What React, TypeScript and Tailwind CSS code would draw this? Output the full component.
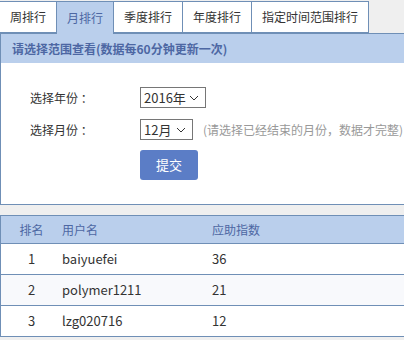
import React from 'react';

const tabs = ['周排行', '月排行', '季度排行', '年度排行', '指定时间范围排行'];

const rows = [
  { rank: 1, name: 'baiyuefei', score: 36 },
  { rank: 2, name: 'polymer1211', score: 21 },
  { rank: 3, name: 'lzg020716', score: 12 },
];

const Chevron = () => (
  <svg width="10" height="6" viewBox="0 0 10 6" className="ml-auto mr-[6px]">
    <path d="M1 1 L5 5 L9 1" fill="none" stroke="#333" strokeWidth="1" />
  </svg>
);

export default function App() {
  return (
    <div
      className="w-[404px] h-[340px] bg-[#efefef] overflow-hidden text-[12px] text-[#333]"
      style={{ fontFamily: '"Microsoft YaHei", "Noto Sans CJK SC", sans-serif' }}
    >
      {/* 顶部标签 */}
      <div className="flex pt-[1px] border-b border-[#6f8fb6]">
        {tabs.map((t, i) => (
          <div
            key={t}
            className={
              'h-[32px] px-[10px] flex items-center border-t border-r border-[#6f8fb6] -mb-[1px] ' +
              (i === 1 ? 'bg-[#bacfec] text-[#4d67a3] h-[33px]' : 'bg-white text-[#333] border-b')
            }
          >
            {t}
          </div>
        ))}
      </div>

      {/* 查看范围 */}
      <div className="border-l border-b border-[#6f8fb6] bg-white">
        <div className="h-[29px] bg-[#bacfec] pl-[11px] flex items-center font-bold text-[#4d67a3]">
          请选择范围查看(数据每60分钟更新一次)
        </div>
        <div className="h-[141px] pt-[24px] pl-[29px]">
          <div className="flex items-center h-[21px]">
            <span className="w-[110px]">选择年份 ：</span>
            <div className="w-[66px] h-[21px] border border-[#767676] flex items-center pl-[3px] text-[13px]">
              2016年
              <Chevron />
            </div>
          </div>
          <div className="flex items-center h-[21px] mt-[11px]">
            <span className="w-[110px]">选择月份 ：</span>
            <div className="w-[53px] h-[21px] border border-[#767676] flex items-center pl-[3px] text-[13px]">
              12月
              <Chevron />
            </div>
            <span className="ml-[10px] text-[#999] whitespace-nowrap">(请选择已经结束的月份，数据才完整)</span>
          </div>
          <div className="pl-[110px] mt-[10px]">
            <button className="w-[58px] h-[30px] rounded-[3px] bg-[#5b7dc6] text-white text-[13px]">提交</button>
          </div>
        </div>
      </div>

      {/* 排行表 */}
      <div className="mt-[10px] border-l border-t border-[#6f8fb6] bg-white">
        <div className="h-[28px] flex items-center bg-[#bacfec] text-[#4d67a3] border-b border-[#6f8fb6]">
          <div className="w-[61px] text-center">排名</div>
          <div className="w-[150px]">用户名</div>
          <div>应助指数</div>
        </div>
        {rows.map((r, i) => (
          <div
            key={r.rank}
            className={
              'h-[31px] flex items-center border-b border-[#6f8fb6] text-[13px] ' +
              (i === 1 ? 'bg-[#f8f9fc]' : 'bg-white')
            }
          >
            <div className="w-[61px] text-center">{r.rank}</div>
            <div className="w-[150px]">{r.name}</div>
            <div>{r.score}</div>
          </div>
        ))}
      </div>
    </div>
  );
}
